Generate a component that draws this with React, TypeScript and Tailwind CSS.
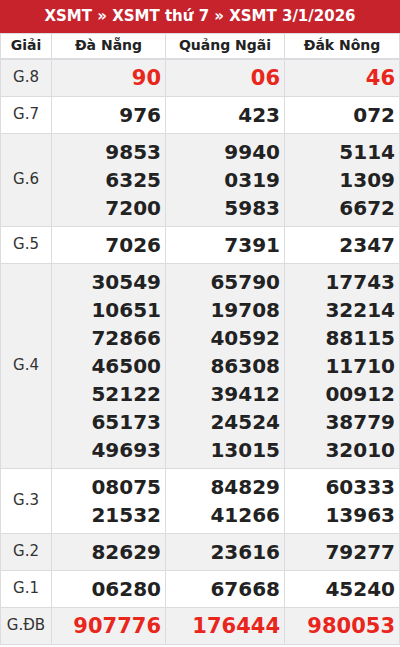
import React from 'react';

type Row = { label: string; values: string[][]; red?: boolean };

const rows: Row[] = [
  { label: 'G.8', values: [['90'], ['06'], ['46']], red: true },
  { label: 'G.7', values: [['976'], ['423'], ['072']] },
  { label: 'G.6', values: [['9853', '6325', '7200'], ['9940', '0319', '5983'], ['5114', '1309', '6672']] },
  { label: 'G.5', values: [['7026'], ['7391'], ['2347']] },
  {
    label: 'G.4',
    values: [
      ['30549', '10651', '72866', '46500', '52122', '65173', '49693'],
      ['65790', '19708', '40592', '86308', '39412', '24524', '13015'],
      ['17743', '32214', '88115', '11710', '00912', '38779', '32010'],
    ],
  },
  { label: 'G.3', values: [['08075', '21532'], ['84829', '41266'], ['60333', '13963']] },
  { label: 'G.2', values: [['82629'], ['23616'], ['79277']] },
  { label: 'G.1', values: [['06280'], ['67668'], ['45240']] },
  { label: 'G.ĐB', values: [['907776'], ['176444'], ['980053']], red: true },
];

const App: React.FC = () => {
  return (
    <div className="w-[400px] bg-white font-['DejaVu_Sans',sans-serif]">
      <div className="h-[33px] bg-[#c6232d] flex items-center justify-center text-white font-bold text-[15px]">
        XSMT » XSMT thứ 7 » XSMT 3/1/2026
      </div>
      <table className="w-[399px] border-collapse table-fixed">
        <colgroup>
          <col className="w-[51px]" />
          <col className="w-[114px]" />
          <col className="w-[119px]" />
          <col className="w-[115px]" />
        </colgroup>
        <thead>
          <tr className="h-[25px] text-[14px] font-bold text-[#222]">
            <th className="border border-[#dcdce0] border-b-2 text-center">Giải</th>
            <th className="border border-[#dcdce0] border-b-2 text-center">Đà Nẵng</th>
            <th className="border border-[#dcdce0] border-b-2 text-center">Quảng Ngãi</th>
            <th className="border border-[#dcdce0] border-b-2 text-center">Đắk Nông</th>
          </tr>
        </thead>
        <tbody>
          {rows.map((row, i) => (
            <tr key={row.label} className={i % 2 === 0 ? 'bg-[#f1f1f2]' : 'bg-white'}>
              <td className="border border-[#dcdce0] text-center text-[15px] text-[#333] align-middle">
                {row.label}
              </td>
              {row.values.map((col, j) => (
                <td key={j} className="border border-[#dcdce0] py-[4px] pr-[4px] text-right align-middle">
                  {col.map((n) => (
                    <div
                      key={n}
                      className={
                        row.red
                          ? 'leading-[28px] font-bold text-[21px] text-[#e8261c]'
                          : 'leading-[28px] font-bold text-[20px] text-[#222]'
                      }
                    >
                      {n}
                    </div>
                  ))}
                </td>
              ))}
            </tr>
          ))}
        </tbody>
      </table>
    </div>
  );
};

export default App;
